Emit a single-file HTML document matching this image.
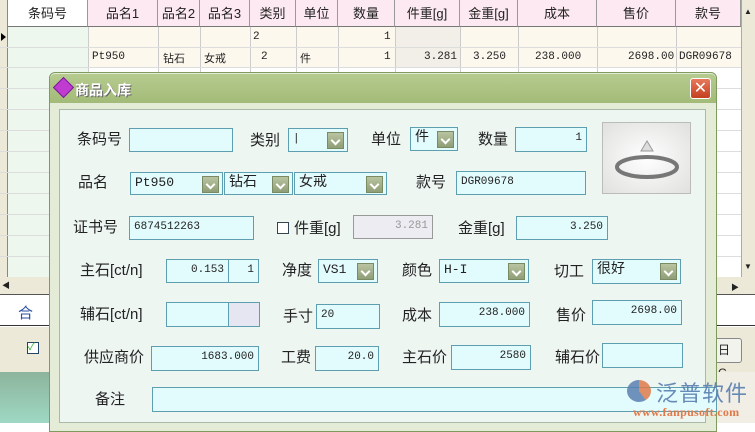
<!DOCTYPE html><html><head><meta charset="utf-8"><style>
*{margin:0;padding:0;box-sizing:border-box}
body{width:755px;height:423px;overflow:hidden;position:relative;background:#fff;font-family:"Liberation Sans","Noto Sans CJK SC",sans-serif;font-size:13px;color:#222}
.a{position:absolute}
.h{position:absolute;top:0;height:27px;border-right:1px solid #999;border-bottom:1px solid #777;text-align:center;line-height:27px;font-size:13px;background:#fce9f1}
.vl{position:absolute;top:27px;height:250px;border-right:1px solid #ccc}
.hl{position:absolute;left:0;width:741px;border-top:1px solid #ddd}
.c{position:absolute;font-family:"Liberation Mono","Noto Sans CJK SC",monospace;font-size:11px}
.in{position:absolute;background:#e2fbfd;border:1px solid #5d9fb0;font-family:"Liberation Mono","Noto Sans CJK SC",monospace;font-size:11px;padding:2px 4px;line-height:16px}
.r{text-align:right}
.l{position:absolute;font-size:15px;line-height:20px}
.dd{position:absolute;right:3px;top:3px;width:17px;height:17px;background:linear-gradient(#b9c3a1,#8f9e76);border:1px solid #7a8a63}
.dd:after{content:"";position:absolute;left:4px;top:4px;width:5px;height:5px;border-right:2px solid #fff;border-bottom:2px solid #fff;transform:rotate(45deg)}
</style></head><body>
<div class="a" style="left:0;top:0;width:8px;height:277px;background:#ece9d8;border-right:1px solid #888"></div>
<div class="h" style="left:8px;width:80px;background:#fff">条码号</div>
<div class="h" style="left:88px;width:70px">品名1</div>
<div class="h" style="left:158px;width:42px">品名2</div>
<div class="h" style="left:200px;width:50px">品名3</div>
<div class="h" style="left:250px;width:46px">类别</div>
<div class="h" style="left:296px;width:42px">单位</div>
<div class="h" style="left:338px;width:57px">数量</div>
<div class="h" style="left:395px;width:65px">件重[g]</div>
<div class="h" style="left:460px;width:58px">金重[g]</div>
<div class="h" style="left:518px;width:79px">成本</div>
<div class="h" style="left:597px;width:79px">售价</div>
<div class="h" style="left:676px;width:65px">款号</div>
<div class="a" style="left:88px;top:27px;width:653px;height:40px;background:#fdf8ee"></div>
<div class="a" style="left:395px;top:27px;width:65px;height:40px;background:#f1efe8"></div>
<div class="a" style="left:8px;top:27px;width:80px;height:250px;background:#eef7ee"></div>
<div class="vl" style="left:88px"></div><div class="vl" style="left:158px"></div><div class="vl" style="left:200px"></div><div class="vl" style="left:250px"></div><div class="vl" style="left:296px"></div><div class="vl" style="left:338px"></div><div class="vl" style="left:395px"></div><div class="vl" style="left:460px"></div><div class="vl" style="left:518px"></div><div class="vl" style="left:597px"></div><div class="vl" style="left:676px"></div><div class="vl" style="left:741px"></div>
<div class="hl" style="top:47px"></div><div class="hl" style="top:67px"></div><div class="hl" style="top:88px"></div><div class="hl" style="top:109px"></div><div class="hl" style="top:130px"></div><div class="hl" style="top:151px"></div><div class="hl" style="top:172px"></div><div class="hl" style="top:193px"></div><div class="hl" style="top:214px"></div><div class="hl" style="top:235px"></div><div class="hl" style="top:256px"></div>
<div class="a" style="left:1px;top:33px;width:0;height:0;border-left:5px solid #000;border-top:4px solid transparent;border-bottom:4px solid transparent"></div>
<div class="c" style="left:253px;top:31px">2</div><div class="c" style="left:384px;top:31px">1</div>
<div class="c" style="left:92px;top:51px">Pt950</div><div class="c" style="left:163px;top:50px">钻石</div><div class="c" style="left:204px;top:50px">女戒</div><div class="c" style="left:261px;top:51px">2</div><div class="c" style="left:300px;top:50px">件</div><div class="c" style="left:384px;top:51px">1</div><div class="c" style="left:424px;top:51px">3.281</div><div class="c" style="left:473px;top:51px">3.250</div><div class="c" style="left:535px;top:51px">238.000</div><div class="c" style="left:628px;top:51px">2698.00</div><div class="c" style="left:679px;top:51px">DGR09678</div>
<div class="a" style="left:741px;top:0;width:14px;height:277px;background:#ece9d8;border-left:1px solid #aaa"></div>
<div class="a" style="left:744px;top:7px;font-size:8px">▲</div><div class="a" style="left:744px;top:262px;font-size:8px">▼</div>
<div class="a" style="left:0;top:277px;width:755px;height:18px;background:#ece9d8;border-bottom:1px solid #555"></div>
<div class="a" style="left:2px;top:280px;font-size:8px">◀</div><div class="a" style="left:731px;top:282px;font-size:8px">▶</div>
<div class="a" style="left:0;top:296px;width:755px;height:30px;background:#fff;border-bottom:1px solid #333"></div>
<div class="a" style="left:18px;top:302px;color:#2a4fa0;font-size:15px">合</div>
<div class="a" style="left:0;top:327px;width:755px;height:45px;background:#ece9d8"></div>
<div class="a" style="left:27px;top:342px;width:12px;height:12px;border:1px solid #246;background:#fff;color:#2a2;font-size:10px;line-height:10px">✓</div>
<div class="a" style="left:714px;top:338px;width:28px;height:25px;border:1px solid #888;border-radius:3px;background:#f3f3ee;font-size:12px;line-height:23px;padding-left:3px">日 C</div>
<div class="a" style="left:0;top:372px;width:755px;height:51px;background:linear-gradient(#8db49c,#9ed8c4)"></div>
<div class="a" style="left:716px;top:372px;width:39px;height:51px;background:#f1eee6"></div>
<div class="a" style="left:49px;top:72px;width:668px;height:360px;background:#e4ebd7;border:1px solid #7f9a5f;border-radius:6px 6px 0 0"></div>
<div class="a" style="left:50px;top:74px;width:666px;height:29px;background:linear-gradient(#b6cb8f,#a3bb78);border-radius:5px 5px 0 0"></div>
<div class="a" style="left:56px;top:80px;width:15px;height:15px;background:#c03cd0;transform:rotate(45deg);border:1px solid #7a1a9a"></div>
<div class="a" style="left:75px;top:80px;color:#fff;font-size:14px;font-weight:bold;text-shadow:1px 1px 0 #666">商品入库</div>
<div class="a" style="left:690px;top:78px;width:21px;height:21px;background:linear-gradient(#e8785a,#c3401f);border:1px solid #fff;border-radius:3px;color:#fff;text-align:center;font-size:16px;line-height:19px">✕</div>
<div class="a" style="left:59px;top:109px;width:647px;height:314px;background:#eef6f2;border:1px solid #a9b8a8"></div>
<div class="l" style="left:77px;top:130px">条码号</div><div class="in" style="left:129px;top:128px;width:104px;height:24px"></div>
<div class="l" style="left:250px;top:131px">类别</div><div class="in" style="left:288px;top:128px;width:60px;height:24px">|<span class="dd"></span></div>
<div class="l" style="left:371px;top:130px">单位</div><div class="in" style="left:410px;top:127px;width:48px;height:24px;font-size:14px">件<span class="dd"></span></div>
<div class="l" style="left:478px;top:130px">数量</div><div class="in r" style="left:515px;top:127px;width:72px;height:25px">1</div>
<div class="a" style="left:602px;top:122px;width:89px;height:72px;background:radial-gradient(#fff,#e0e0de);border:1px solid #bbb"><svg width="87" height="70"><ellipse cx="44" cy="44" rx="30" ry="10" fill="none" stroke="#777" stroke-width="4"/><path d="M38 28l6-10 6 10z" fill="#ddd" stroke="#999"/></svg></div>
<div class="l" style="left:78px;top:173px">品名</div>
<div class="in" style="left:130px;top:172px;width:93px;height:23px;font-size:13px">Pt950<span class="dd"></span></div>
<div class="in" style="left:224px;top:172px;width:69px;height:23px;font-size:14px;line-height:16px">钻石<span class="dd"></span></div>
<div class="in" style="left:294px;top:172px;width:93px;height:23px;font-size:14px;line-height:16px">女戒<span class="dd"></span></div>
<div class="l" style="left:416px;top:173px">款号</div><div class="in" style="left:456px;top:171px;width:130px;height:24px">DGR09678</div>
<div class="l" style="left:73px;top:218px">证书号</div><div class="in" style="left:129px;top:216px;width:125px;height:24px">6874512263</div>
<div class="a" style="left:277px;top:222px;width:12px;height:12px;border:1px solid #345;background:#fff"></div>
<div class="l" style="left:294px;top:219px">件重[g]</div><div class="in r" style="left:353px;top:215px;width:80px;height:24px;background:#ececf2;border-color:#999;color:#999">3.281</div>
<div class="l" style="left:458px;top:219px">金重[g]</div><div class="in r" style="left:516px;top:216px;width:92px;height:24px">3.250</div>
<div class="l" style="left:80px;top:261px">主石[ct/n]</div><div class="in r" style="left:166px;top:259px;width:63px;height:24px">0.153</div><div class="in r" style="left:228px;top:259px;width:31px;height:24px">1</div>
<div class="l" style="left:282px;top:261px">净度</div><div class="in" style="left:318px;top:259px;width:60px;height:24px;font-size:13px">VS1<span class="dd"></span></div>
<div class="l" style="left:402px;top:261px">颜色</div><div class="in" style="left:439px;top:259px;width:90px;height:24px;font-size:13px">H-I<span class="dd"></span></div>
<div class="l" style="left:554px;top:262px">切工</div><div class="in" style="left:592px;top:259px;width:89px;height:25px;font-size:14px">很好<span class="dd"></span></div>
<div class="l" style="left:80px;top:305px">辅石[ct/n]</div><div class="in" style="left:166px;top:302px;width:63px;height:25px"></div><div class="in" style="left:228px;top:302px;width:32px;height:25px;background:#e6e6f2"></div>
<div class="l" style="left:283px;top:307px">手寸</div><div class="in" style="left:316px;top:304px;width:64px;height:25px">20</div>
<div class="l" style="left:402px;top:306px">成本</div><div class="in r" style="left:439px;top:302px;width:91px;height:25px">238.000</div>
<div class="l" style="left:556px;top:306px">售价</div><div class="in r" style="left:592px;top:300px;width:90px;height:25px">2698.00</div>
<div class="l" style="left:84px;top:348px">供应商价</div><div class="in r" style="left:151px;top:346px;width:108px;height:25px">1683.000</div>
<div class="l" style="left:281px;top:348px">工费</div><div class="in r" style="left:315px;top:346px;width:64px;height:25px">20.0</div>
<div class="l" style="left:402px;top:348px">主石价</div><div class="in r" style="left:451px;top:345px;width:80px;height:25px">2580</div>
<div class="l" style="left:555px;top:348px">辅石价</div><div class="in" style="left:602px;top:343px;width:81px;height:25px"></div>
<div class="l" style="left:95px;top:390px">备注</div><div class="in" style="left:152px;top:387px;width:565px;height:25px"></div>
<div class="a" style="left:627px;top:380px;width:24px;height:22px;border-radius:50%;background:conic-gradient(#e07a4a 0 40%,#5a7fb0 40% 100%);opacity:.85"></div>
<div class="a" style="left:656px;top:376px;font-size:22px;color:#5a7fb0;letter-spacing:1px;opacity:.9">泛普软件</div>
<div class="a" style="left:633px;top:405px;font-size:12px;color:#e07a4a;font-family:'Liberation Serif',serif;font-weight:bold;letter-spacing:.3px">www.fanpusoft.com</div>
</body></html>
